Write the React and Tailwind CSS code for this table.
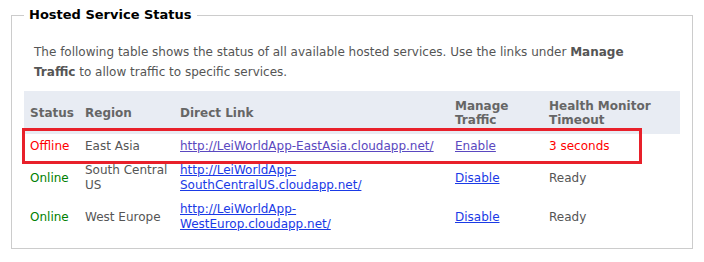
import React from 'react';

const rows = [
  {
    status: 'Offline',
    region: 'East Asia',
    link: ['http://LeiWorldApp-EastAsia.cloudapp.net/'],
    action: 'Enable',
    timeout: '3 seconds',
    offline: true,
  },
  {
    status: 'Online',
    region: ['South Central', 'US'],
    link: ['http://LeiWorldApp-', 'SouthCentralUS.cloudapp.net/'],
    action: 'Disable',
    timeout: 'Ready',
  },
  {
    status: 'Online',
    region: 'West Europe',
    link: ['http://LeiWorldApp-', 'WestEurop.cloudapp.net/'],
    action: 'Disable',
    timeout: 'Ready',
  },
];

const th = 'pl-[6px] pt-[8px] pb-[7px]';
const td = 'pl-[6px] pt-[5px] pb-[4px]';

const App = () => {
  return (
    <div className="w-[704px] h-[262px] bg-white pt-[6px] pl-[11px] font-['DejaVu_Sans',Verdana,sans-serif] text-[12px]">
      <fieldset className="w-[682px] h-[243px] border border-[#cccccc] px-[12px]">
        <legend className="px-[5px] text-[13px] leading-[18px] font-bold text-black">
          Hosted Service Status
        </legend>

        {/* Intro */}
        <p className="w-[620px] px-[10px] pt-[18px] leading-[20px] text-[#555555]">
          The following table shows the status of all available hosted services. Use the links under{' '}
          <b>Manage</b> <b>Traffic</b> to allow traffic to specific services.
        </p>

        {/* Table */}
        <div className="relative mt-[9px]">
          <table className="w-[656px] border-collapse table-fixed">
            <colgroup>
              <col className="w-[55px]" />
              <col className="w-[95px]" />
              <col className="w-[275px]" />
              <col className="w-[94px]" />
              <col className="w-[137px]" />
            </colgroup>
            <thead>
              <tr className="bg-[#e8ecf3] text-[#666666] font-bold text-left leading-[14px] align-middle">
                <th className={th}>Status</th>
                <th className={th}>Region</th>
                <th className={th}>Direct Link</th>
                <th className={th}>Manage<br />Traffic</th>
                <th className={th}>Health Monitor<br />Timeout</th>
              </tr>
            </thead>
            <tbody>
              {rows.map((r, i) => (
                <tr key={i} className="leading-[15px] align-middle">
                  <td className={`${td} ${r.offline ? 'text-[#ff0000]' : 'text-[#008000]'}`}>
                    {r.status}
                  </td>
                  <td className={`${td} text-[#555555]`}>
                    {Array.isArray(r.region) ? (
                      <>
                        {r.region[0]}
                        <br />
                        {r.region[1]}
                      </>
                    ) : (
                      r.region
                    )}
                  </td>
                  <td className={td}>
                    <a className={`underline ${r.offline ? 'text-[#5a48c0]' : 'text-[#1a3ae6]'}`}>
                      {r.link[0]}
                      {r.link[1] && <br />}
                      {r.link[1]}
                    </a>
                  </td>
                  <td className={td}>
                    <a className={`underline ${r.offline ? 'text-[#5a48c0]' : 'text-[#1a3ae6]'}`}>{r.action}</a>
                  </td>
                  <td className={`${td} ${r.offline ? 'text-[#ff0000]' : 'text-[#555555]'}`}>{r.timeout}</td>
                </tr>
              ))}
            </tbody>
          </table>

          {/* Highlight box */}
          <div className="absolute left-[-2px] top-[37px] w-[620px] h-[36px] border-[3px] border-[#e8202a]" />
        </div>
      </fieldset>
    </div>
  );
};

export default App;
